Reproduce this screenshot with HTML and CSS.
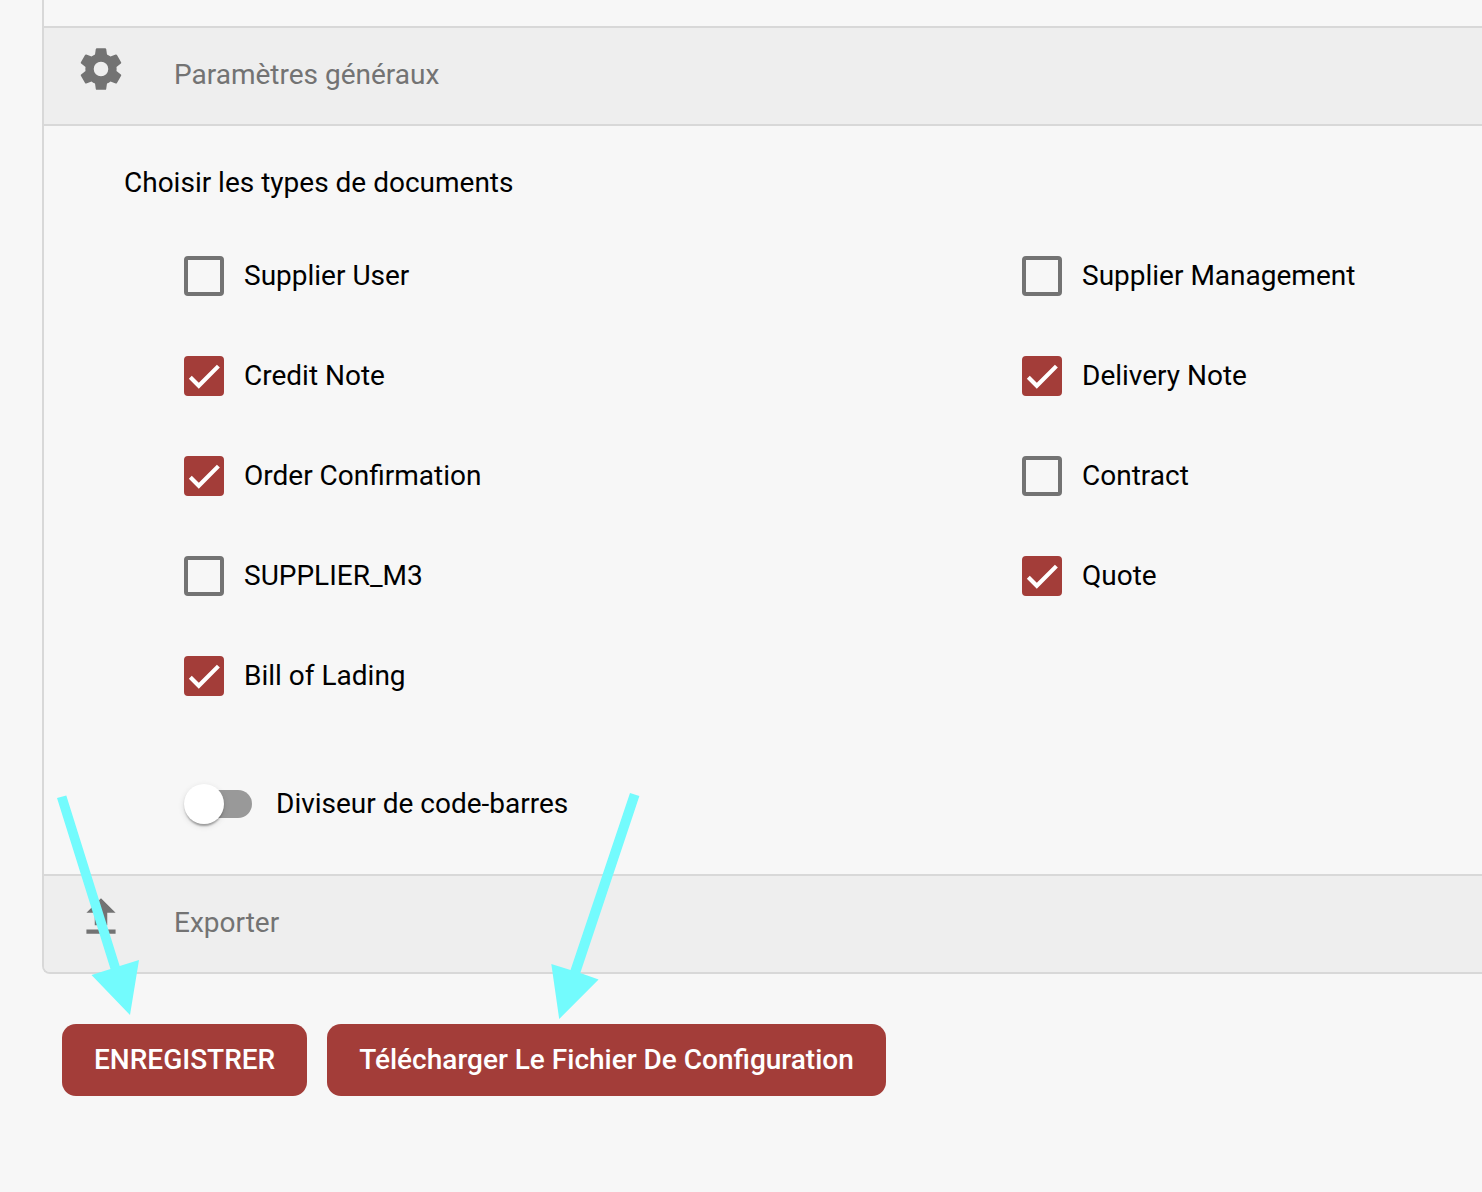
FILE: index.html
```html
<!DOCTYPE html>
<html lang="fr">
<head>
<meta charset="utf-8">
<title>Paramètres généraux</title>
<link rel="stylesheet" href="styles.css">
</head>
<body>
<main class="page">
  <div class="accordion">
    <div class="previous"></div>
    <header class="panel-header">
      <svg class="panel-icon" viewBox="0 0 24 24"><path d="M12,15.5A3.5,3.5 0 0,1 8.5,12A3.5,3.5 0 0,1 12,8.5A3.5,3.5 0 0,1 15.5,12A3.5,3.5 0 0,1 12,15.5M19.43,12.97C19.47,12.65 19.5,12.33 19.5,12C19.5,11.67 19.47,11.34 19.43,11L21.54,9.37C21.73,9.22 21.78,8.95 21.66,8.73L19.66,5.27C19.54,5.05 19.27,4.96 19.05,5.05L16.56,6.05C16.04,5.66 15.5,5.32 14.87,5.07L14.5,2.42C14.46,2.18 14.25,2 14,2H10C9.75,2 9.54,2.18 9.5,2.42L9.13,5.07C8.5,5.32 7.96,5.66 7.44,6.05L4.95,5.05C4.73,4.96 4.46,5.05 4.34,5.27L2.34,8.73C2.21,8.95 2.27,9.22 2.46,9.37L4.57,11C4.53,11.34 4.5,11.67 4.5,12C4.5,12.33 4.53,12.65 4.57,12.97L2.46,14.63C2.27,14.78 2.21,15.05 2.34,15.27L4.34,18.73C4.46,18.95 4.73,19.03 4.95,18.95L7.44,17.94C7.96,18.34 8.5,18.68 9.13,18.93L9.5,21.58C9.54,21.82 9.75,22 10,22H14C14.25,22 14.46,21.82 14.5,21.58L14.87,18.93C15.5,18.67 16.04,18.34 16.56,17.94L19.05,18.95C19.27,19.03 19.54,18.95 19.66,18.73L21.66,15.27C21.78,15.05 21.73,14.78 21.54,14.63L19.43,12.97Z"/></svg>
      <h2 class="panel-title">Paramètres généraux</h2>
    </header>
    <section class="panel-body">
      <p class="section-label">Choisir les types de documents</p>
      <div class="options">
        <label class="option"><span class="checkbox"></span>Supplier User</label>
        <label class="option"><span class="checkbox"></span>Supplier Management</label>
        <label class="option"><span class="checkbox checked"><svg class="check" viewBox="0 0 24 24"><path d="M1.73,12.91 8.1,19.28 22.79,4.59"/></svg></span>Credit Note</label>
        <label class="option"><span class="checkbox checked"><svg class="check" viewBox="0 0 24 24"><path d="M1.73,12.91 8.1,19.28 22.79,4.59"/></svg></span>Delivery Note</label>
        <label class="option"><span class="checkbox checked"><svg class="check" viewBox="0 0 24 24"><path d="M1.73,12.91 8.1,19.28 22.79,4.59"/></svg></span>Order Confirmation</label>
        <label class="option"><span class="checkbox"></span>Contract</label>
        <label class="option"><span class="checkbox"></span>SUPPLIER_M3</label>
        <label class="option"><span class="checkbox checked"><svg class="check" viewBox="0 0 24 24"><path d="M1.73,12.91 8.1,19.28 22.79,4.59"/></svg></span>Quote</label>
        <label class="option"><span class="checkbox checked"><svg class="check" viewBox="0 0 24 24"><path d="M1.73,12.91 8.1,19.28 22.79,4.59"/></svg></span>Bill of Lading</label>
      </div>
      <label class="toggle-row"><span class="toggle"><span class="track"></span><span class="thumb"></span></span>Diviseur de code-barres</label>
    </section>
    <header class="panel-header">
      <svg class="panel-icon" viewBox="0 0 24 24"><path d="M9 16h6v-6h4l-7-7-7 7h4zM5 18h14v2H5z"/></svg>
      <h2 class="panel-title">Exporter</h2>
    </header>
  </div>
  <div class="actions">
    <button class="button">ENREGISTRER</button>
    <button class="button">Télécharger Le Fichier De Configuration</button>
  </div>
  <svg class="arrows" viewBox="0 0 1482 1192">
    <path d="M57 798L66.300 795.500L119.700 966L139 960L130 1015L91.500 975L110.500 969Z"/>
    <path d="M630 793L639.400 796L580.300 973L598.600 979.500L559.200 1019L551.300 964L570.500 970Z"/>
  </svg>
</main>
</body>
</html>
```
FILE: styles.css
```css
* { box-sizing: border-box; }
body {
  margin: 0;
  background: #f7f7f7;
  color: #000;
  font: 28px/40px Roboto, sans-serif;
}
.page {
  position: relative;
  height: 1192px;
  overflow: hidden;
}
.accordion {
  margin-left: 42px;
  height: 974px;
  border-left: 2px solid #d8d8d8;
  border-bottom: 2px solid #d8d8d8;
  border-bottom-left-radius: 8px;
  overflow: hidden;
}
.previous { height: 26px; }
.panel-header {
  display: flex;
  align-items: flex-start;
  height: 100px;
  padding: 16px 0 0 32px;
  border-top: 2px solid #d8d8d8;
  border-bottom: 2px solid #d8d8d8;
  background: #eee;
  color: #737373;
}
.panel-icon {
  width: 50px;
  height: 50px;
  fill: #737373;
}
.panel-title {
  margin: 11px 0 0 48px;
  font-size: 28px;
  line-height: 40px;
  font-weight: 400;
}
.panel-body {
  height: 748px;
  padding: 37px 0 0 80px;
}
.section-label { margin: 0; }
.options {
  display: grid;
  grid-template-columns: 838px 1fr;
  grid-auto-rows: 40px;
  row-gap: 60px;
  margin: 53px 0 0 60px;
}
.option {
  display: flex;
  align-items: center;
  gap: 20px;
}
.checkbox {
  display: flex;
  width: 40px;
  height: 40px;
  border: 4px solid #737373;
  border-radius: 4px;
}
.checked {
  border-color: #a33d39;
  background: #a33d39;
}
.check {
  width: 32px;
  height: 32px;
  fill: none;
  stroke: #fff;
  stroke-width: 3.12;
}
.toggle-row {
  display: flex;
  align-items: center;
  gap: 24px;
  margin: 88px 0 0 60px;
}
.toggle {
  display: flex;
  align-items: center;
  width: 68px;
  height: 40px;
}
.track {
  flex: none;
  width: 64px;
  height: 28px;
  margin-left: 4px;
  border-radius: 14px;
  background: #999;
}
.thumb {
  flex: none;
  width: 40px;
  height: 40px;
  margin-left: -68px;
  border-radius: 50%;
  background: #fff;
  box-shadow: 0 4px 2px -2px rgba(0,0,0,.2), 0 2px 2px rgba(0,0,0,.14), 0 2px 6px rgba(0,0,0,.12);
}
.actions {
  display: flex;
  gap: 20px;
  padding: 50px 0 0 62px;
}
.button {
  height: 72px;
  padding: 0 32px;
  border: 0;
  border-radius: 14px;
  background: #a33d39;
  color: #fff;
  font: 500 28px/72px Roboto, sans-serif;
}
.arrows {
  position: absolute;
  inset: 0;
  width: 1482px;
  height: 1192px;
  fill: #73fbfd;
  pointer-events: none;
}
```
